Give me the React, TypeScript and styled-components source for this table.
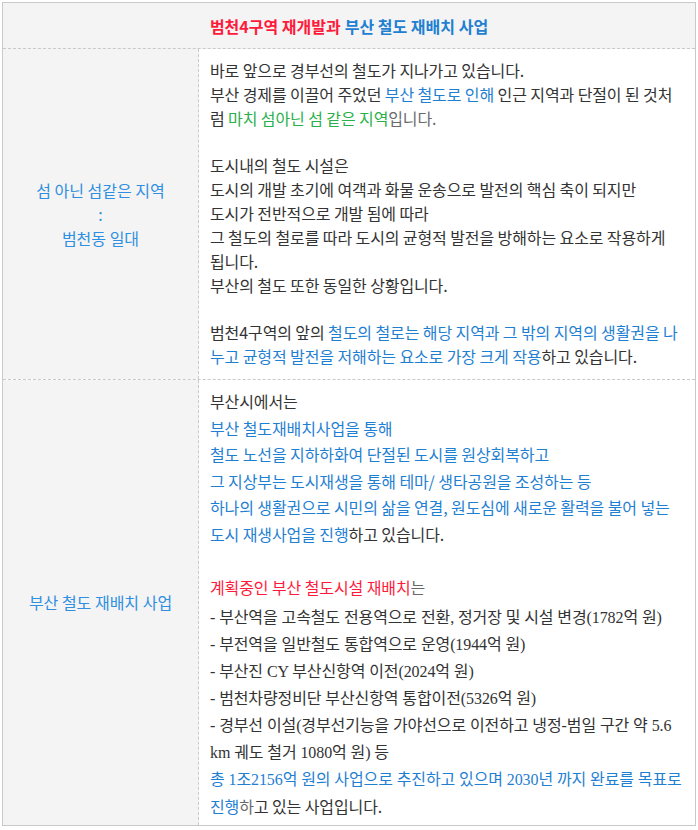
import React from 'react';
import styled, { createGlobalStyle } from 'styled-components';

const GlobalStyle = createGlobalStyle`
  html, body {
    margin: 0;
    padding: 0;
    background: #ffffff;
  }
  body {
    font-family: "Noto Sans CJK KR", "Noto Sans", sans-serif;
    color: #333333;
  }
`;

function App() {
  return (
    <Page>
      <GlobalStyle />
      <Table>
        <Header>
          <Red>범천4구역 재개발과</Red> <Blue>부산 철도 재배치 사업</Blue>
        </Header>

        <Row>
          <LabelCell>
            섬 아닌 섬같은 지역
            <br />:
            <br />
            범천동 일대
          </LabelCell>
          <BodyCell $lineHeight={23.85} $padTop={10} $padBottom={10}>
            바로 앞으로 경부선의 철도가 지나가고 있습니다.
            <br />
            부산 경제를 이끌어 주었던 <Blue>부산 철도로 인해</Blue> 인근 지역과 단절이 된 것처
            <br />
            럼 <Green>마치 섬아닌 섬 같은 지역</Green>
            <Muted>입니다.</Muted>
            <br />
            <br />
            도시내의 철도 시설은
            <br />
            도시의 개발 초기에 여객과 화물 운송으로 발전의 핵심 축이 되지만
            <br />
            도시가 전반적으로 개발 됨에 따라
            <br />
            그 철도의 철로를 따라 도시의 균형적 발전을 방해하는 요소로 작용하게
            <br />
            됩니다.
            <br />
            부산의 철도 또한 동일한 상황입니다.
            <br />
            <br />
            범천4구역의 앞의 <Blue>철도의 철로는 해당 지역과 그 밖의 지역의 생활권을 나</Blue>
            <br />
            <Blue>누고 균형적 발전을 저해하는 요소로 가장 크게 작용</Blue>하고 있습니다.
          </BodyCell>
        </Row>

        <Row $last>
          <LabelCell>부산 철도 재배치 사업</LabelCell>
          <BodyCell $lineHeight={26.53} $padTop={8} $padBottom={5}>
            부산시에서는
            <br />
            <Blue>부산 철도재배치사업을 통해</Blue>
            <br />
            <Blue>철도 노선을 지하하화여 단절된 도시를 원상회복하고</Blue>
            <br />
            <Blue>그 지상부는 도시재생을 통해 테마/ 생타공원을 조성하는 등</Blue>
            <br />
            <Blue>하나의 생활권으로 시민의 삶을 연결, 원도심에 새로운 활력을 불어 넣는</Blue>
            <br />
            <Blue>도시 재생사업을 진행</Blue>하고 있습니다.
            <br />
            <br />
            <Red>계획중인 부산 철도시설 재배치</Red>
            <Muted>는</Muted>
            <SerifBlock>
              - 부산역을 고속철도 전용역으로 전환, 정거장 및 시설 변경(1782억 원)
              <br />
              - 부전역을 일반철도 통합역으로 운영(1944억 원)
              <br />
              - 부산진 CY 부산신항역 이전(2024억 원)
              <br />
              - 범천차량정비단 부산신항역 통합이전(5326억 원)
              <br />
              - 경부선 이설(경부선기능을 가야선으로 이전하고 냉정-범일 구간 약 5.6
              <br />
              km 궤도 철거 1080억 원) 등
              <br />
              <Blue>총 1조2156억 원의 사업으로 추진하고 있으며 2030년 까지 완료를 목표로</Blue>
            </SerifBlock>
            <Blue>진행</Blue>
            <Muted>하</Muted>고 있는 사업입니다.
          </BodyCell>
        </Row>
      </Table>
    </Page>
  );
}

export default App;

const Page = styled.div`
  padding: 2px;
`;

const Table = styled.div`
  border: 1px solid #c9c9c9;
  display: flex;
  flex-direction: column;
`;

const Header = styled.div`
  height: 45px;
  display: flex;
  align-items: center;
  justify-content: center;
  gap: 4px;
  background-color: #f4f4f4;
  border-bottom: 1px dashed #c9c9c9;
  font-size: 16px;
  font-weight: 700;
`;

const Row = styled.div<{ $last?: boolean }>`
  display: grid;
  grid-template-columns: 196px 1fr;
  border-bottom: ${({ $last }) => ($last ? 'none' : '1px dashed #c9c9c9')};
`;

const LabelCell = styled.div`
  display: flex;
  flex-direction: column;
  align-items: center;
  justify-content: center;
  text-align: center;
  background-color: #f4f4f4;
  border-right: 1px dashed #c9c9c9;
  font-size: 16px;
  line-height: 24px;
  color: #2f8fe0;
`;

const BodyCell = styled.div<{ $lineHeight: number; $padTop: number; $padBottom: number }>`
  padding: ${({ $padTop, $padBottom }) => `${$padTop}px 8px ${$padBottom}px 11px`};
  font-size: 16px;
  line-height: ${({ $lineHeight }) => $lineHeight}px;
  color: #333333;
  white-space: nowrap;
  letter-spacing: -0.1px;
`;

const SerifBlock = styled.div`
  padding-top: 4px;
  font-family: "Liberation Serif", "Noto Sans CJK KR", serif;
  line-height: 27px;
`;

const Red = styled.span`
  color: #ff1a3c;
`;

const Blue = styled.span`
  color: #1f80d2;
`;

const Green = styled.span`
  color: #29b04a;
`;

const Muted = styled.span`
  color: #6a6a6a;
`;
